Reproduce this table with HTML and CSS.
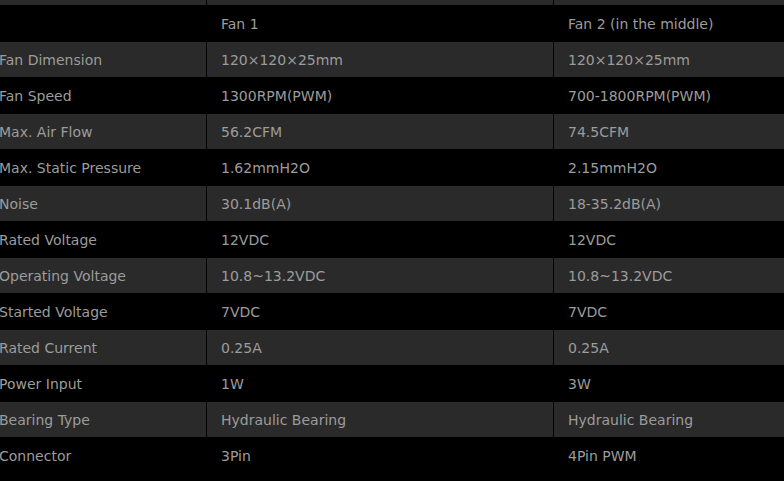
FILE: index.html
```html
<!DOCTYPE html>
<html>
<head>
<meta charset="utf-8">
<link rel="stylesheet" href="styles.css">
</head>
<body>
<table class="spec">
  <colgroup>
    <col class="c1"><col class="c2"><col class="c3">
  </colgroup>
  <tbody>
    <tr class="alt"><td></td><td></td><td></td></tr>
    <tr><td></td><td>Fan 1</td><td>Fan 2 (in the middle)</td></tr>
    <tr class="alt"><td>Fan Dimension</td><td>120×120×25mm</td><td>120×120×25mm</td></tr>
    <tr><td>Fan Speed</td><td>1300RPM(PWM)</td><td>700-1800RPM(PWM)</td></tr>
    <tr class="alt"><td>Max. Air Flow</td><td>56.2CFM</td><td>74.5CFM</td></tr>
    <tr><td>Max. Static Pressure</td><td>1.62mmH2O</td><td>2.15mmH2O</td></tr>
    <tr class="alt"><td>Noise</td><td>30.1dB(A)</td><td>18-35.2dB(A)</td></tr>
    <tr><td>Rated Voltage</td><td>12VDC</td><td>12VDC</td></tr>
    <tr class="alt"><td>Operating Voltage</td><td>10.8~13.2VDC</td><td>10.8~13.2VDC</td></tr>
    <tr><td>Started Voltage</td><td>7VDC</td><td>7VDC</td></tr>
    <tr class="alt"><td>Rated Current</td><td>0.25A</td><td>0.25A</td></tr>
    <tr><td>Power Input</td><td>1W</td><td>3W</td></tr>
    <tr class="alt"><td>Bearing Type</td><td>Hydraulic Bearing</td><td>Hydraulic Bearing</td></tr>
    <tr><td>Connector</td><td>3Pin</td><td>4Pin PWM</td></tr>
  </tbody>
</table>
</body>
</html>
```
FILE: styles.css
```css
html, body {
  margin: 0;
  padding: 0;
  background: #000;
  overflow: hidden;
}
.spec {
  margin-top: -30px;
  margin-left: -15px;
  border-collapse: separate;
  border-spacing: 0;
  table-layout: fixed;
  width: 799px;
  font-family: "DejaVu Sans", Verdana, sans-serif;
  font-size: 14px;
  color: #9c9c9c;
}
.c1 { width: 222px; }
.c2 { width: 347px; }
.c3 { width: 230px; }
.spec td {
  box-sizing: border-box;
  height: 36px;
  padding: 0 0 0 14px;
  border-bottom: 1px solid #000;
  border-right: 1px solid #000;
  vertical-align: middle;
  white-space: nowrap;
}
.spec td:last-child {
  border-right: 0;
}
.spec tr.alt td {
  background: #2a2a2a;
}
```
